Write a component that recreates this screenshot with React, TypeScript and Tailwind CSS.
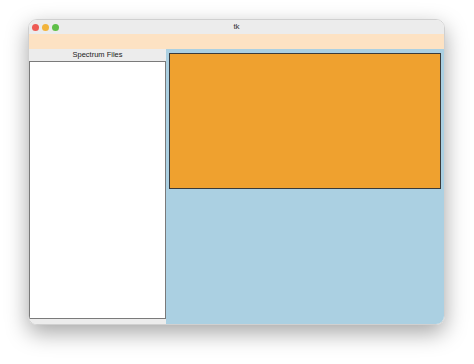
export default function App() {
  return (
    <div className="w-[474px] h-[364px] bg-white pt-[19px] pl-[28px]" style={{ fontFamily: '"Liberation Sans", Arial, sans-serif' }}>
      <div className="w-[417px] h-[306px] rounded-[9px] overflow-hidden flex flex-col shadow-[0_8px_22px_rgba(0,0,0,0.35)] border border-[#d0d0d0]">
        {/* Title bar */}
        <div className="relative h-[14px] bg-[#ececec] flex items-center pl-[3px] gap-[3px]">
          <span className="w-[7px] h-[7px] rounded-full bg-[#ee5b54]" />
          <span className="w-[7px] h-[7px] rounded-full bg-[#f2b43c]" />
          <span className="w-[7px] h-[7px] rounded-full bg-[#5fbf48]" />
          <span className="absolute inset-0 flex items-center justify-center text-[8px] text-[#333]">tk</span>
        </div>

        {/* Toolbar strip */}
        <div className="h-[15px] bg-[#fde2c3]" />

        {/* Content */}
        <div className="flex flex-1">
          <div className="w-[137px] bg-[#ececec] flex flex-col">
            <div className="h-[12px] flex items-center justify-center text-[7.5px] text-[#222]">Spectrum Files</div>
            <div className="w-[137px] h-[258px] bg-white border border-[#7a7a7a]" />
          </div>
          <div className="flex-1 bg-[#abd0e2] pt-[4px] pl-[3px] pr-[3px]">
            <div className="h-[136px] bg-[#efa12f] border border-[#3a3a3a]" />
          </div>
        </div>
      </div>
    </div>
  );
}
